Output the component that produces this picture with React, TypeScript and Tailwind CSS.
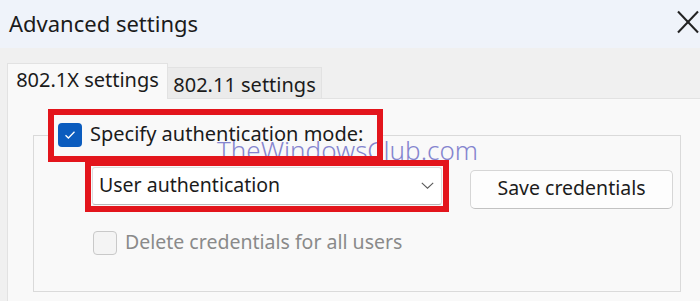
import React from "react";

export default function App() {
  return (
    <div
      className="relative w-[700px] h-[301px] overflow-hidden bg-[#f0f0f0] flex flex-col text-[#1b1b1b]"
      style={{ fontFamily: '"Noto Sans", "Open Sans", sans-serif' }}
    >
      {/* Title bar */}
      <div className="h-[48px] shrink-0 bg-[#eff3fa] flex items-center justify-between pl-[9px] pr-[1px]">
        <span className="text-[22px] leading-none mb-[2px]">Advanced settings</span>
        <svg width="22" height="24" viewBox="0 0 22 24" className="mb-[4px]">
          <line x1="1" y1="1.5" x2="21" y2="22.5" stroke="#222" strokeWidth="2" />
          <line x1="21" y1="1.5" x2="1" y2="22.5" stroke="#222" strokeWidth="2" />
        </svg>
      </div>

      {/* Tabs */}
      <div className="h-[50px] shrink-0 flex items-end pl-[7px]">
        <div className="relative z-10 -mb-px w-[161px] h-[36px] bg-[#f9f9f9] border border-b-0 border-[#e2e2e2] flex items-center justify-center">
          <span className="text-[20px] leading-none mb-[4px]">802.1X settings</span>
        </div>
        <div className="w-[154px] h-[31px] bg-[#ebebeb] border-t border-r border-[#e2e2e2] flex items-center justify-center">
          <span className="text-[20px] leading-none mt-[3px]">802.11 settings</span>
        </div>
      </div>

      {/* Panel */}
      <div className="flex-1 ml-[7px] bg-[#f9f9f9] border-t border-l border-[#e2e2e2]">
        <fieldset className="mt-[10px] ml-[25px] w-[648px] border border-[#dadada] pl-[14px] pb-[36px]">
          <legend className="relative z-20 p-0">
            <div className="w-[335px] h-[53px] border-[6px] border-[#e3151c] flex items-center pl-[4px]">
              <div className="w-[24px] h-[24px] rounded-[4px] bg-[#0b5cbe] flex items-center justify-center mb-[2px]">
                <svg width="12" height="10" viewBox="0 0 12 10">
                  <path d="M1.5 5.2 L4.4 8 L10.5 1.8" fill="none" stroke="#fff" strokeWidth="1.3" />
                </svg>
              </div>
              <span className="ml-[8px] text-[20px] leading-none mb-[4px]">Specify authentication mode:</span>
            </div>
          </legend>

          <div className="flex items-start -mt-[2px]">
            <div className="relative z-20 ml-[37px] w-[364px] h-[52px] border-[6px] border-[#e3151c] bg-[#f9f9f9] p-[1px]">
              <div className="h-full bg-white border border-[#dcdcdc] border-b-[#b8b8b8] rounded-[3px] flex items-center justify-between pl-[6px] pr-[7px]">
                <span className="text-[19.5px] leading-none mb-[3px]">User authentication</span>
                <svg width="13" height="7" viewBox="0 0 13 7" className="mb-[2px]">
                  <path d="M0.8 0.8 L6.5 6.2 L12.2 0.8" fill="none" stroke="#5a5a5a" strokeWidth="1.1" />
                </svg>
              </div>
            </div>
            <div className="ml-[21px] mt-[10px] w-[203px] h-[39px] bg-[#fdfdfd] border border-[#d6d6d6] border-b-[#c2c2c2] rounded-[5px] flex items-center justify-center">
              <span className="text-[19.5px] leading-none mb-[3px]">Save credentials</span>
            </div>
          </div>

          <div className="flex items-center mt-[19px] ml-[45px] h-[24px]">
            <div className="w-[24px] h-[24px] rounded-[4px] border border-[#c9c9c9] bg-[#f4f4f4]" />
            <span className="ml-[8px] text-[19.5px] leading-none mb-[3px] text-[#8a8a8a]">
              Delete credentials for all users
            </span>
          </div>
        </fieldset>
      </div>

      {/* Watermark */}
      <div className="absolute z-10 left-[217px] top-[137px] text-[26px] leading-none font-light text-[#8585cf] pointer-events-none whitespace-nowrap">
        TheWindowsClub.com
      </div>
    </div>
  );
}
